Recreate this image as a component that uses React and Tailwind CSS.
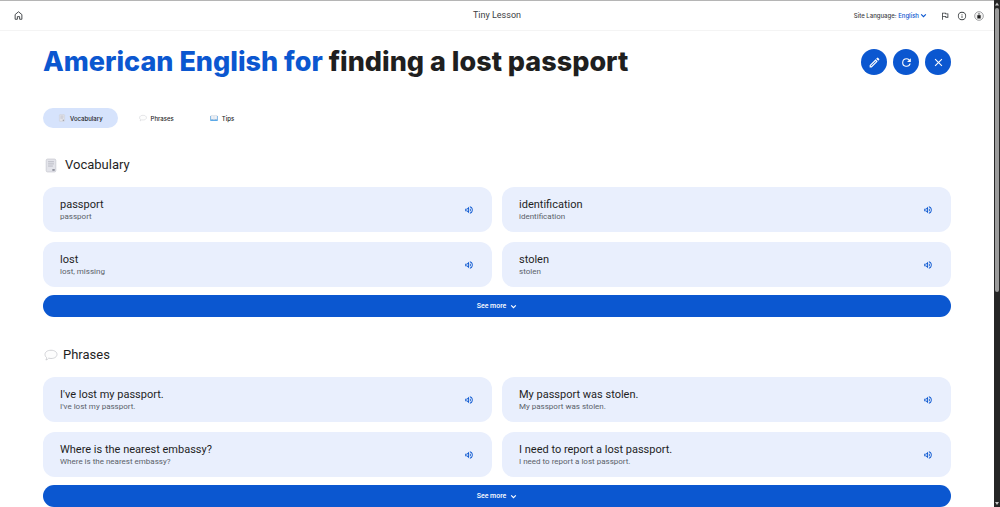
import React, { useState } from 'react';

const VOCABULARY = [
    { term: 'passport', meaning: 'passport' },
    { term: 'identification', meaning: 'identification' },
    { term: 'lost', meaning: 'lost, missing' },
    { term: 'stolen', meaning: 'stolen' },
];

const PHRASES = [
    { term: "I've lost my passport.", meaning: "I've lost my passport." },
    { term: 'My passport was stolen.', meaning: 'My passport was stolen.' },
    { term: 'Where is the nearest embassy?', meaning: 'Where is the nearest embassy?' },
    { term: 'I need to report a lost passport.', meaning: 'I need to report a lost passport.' },
];

const TABS = [
    { id: 'vocabulary', label: 'Vocabulary', icon: NoteIcon },
    { id: 'phrases', label: 'Phrases', icon: BubbleIcon },
    { id: 'tips', label: 'Tips', icon: BookIcon },
];

function NoteIcon({ className }) {
    return (
        <svg viewBox="0 0 24 28" className={className} aria-hidden="true">
            <rect x="3" y="2" width="18" height="24" rx="2.5" fill="#e3e4ea" stroke="#c9cbd2" strokeWidth="1.5" />
            <path d="M6.5 7h11M6.5 11h11M6.5 15h9" stroke="#b0b2bc" strokeWidth="1.5" />
            <path d="M14.5 20.5h4.500v3.500h-4.500Z" fill="#8f929d" />
        </svg>
    );
}

function BubbleIcon({ className }) {
    return (
        <svg viewBox="0 0 28 24" className={className} aria-hidden="true">
            <path
                d="M14 2.5c7 0 12 3.4 12 8.3s-5 8.2-12 8.2c-1.7 0-3.3-.2-4.7-.6C8 20.2 6 21.7 3.8 22c1-1.4 1.5-3 1.3-4.9C3.2 15.5 2 13.3 2 10.8c0-4.900 5-8.300 12-8.300Z"
                fill="#fdfdfd"
                stroke="#c4c6cb"
                strokeWidth="1.5"
            />
        </svg>
    );
}

function BookIcon({ className }) {
    return (
        <svg viewBox="0 0 28 24" className={className} aria-hidden="true">
            <path d="M1 5h26v17H1Z" fill="#3d9be6" />
            <path d="M3 4c4-1.5 8-1.5 11 .5C17 2.5 21 2.5 25 4v14c-4-1-8-1-11 1-3-2-7-2-11-1Z" fill="#eef1f6" stroke="#9fb2c8" />
            <path d="M14 4.5V18" stroke="#b8c4d4" />
        </svg>
    );
}

// Material style glyphs on a 24px grid
function Glyph({ d, className }) {
    return (
        <svg viewBox="0 0 24 24" fill="currentColor" className={className} aria-hidden="true">
            <path d={d} />
        </svg>
    );
}

const GLYPHS = {
    flag: 'M12.36 6l.4 2H18v6h-3.36l-.4-2H7V6h5.36M14 4H5v17h2v-7h5.6l.4 2h7V6h-5.6L14 4Z',
    info: 'M11 7h2v2h-2V7Zm0 4h2v6h-2v-6Zm1-9a10 10 0 1 0 0 20 10 10 0 0 0 0-20Zm0 18a8 8 0 1 1 0-16 8 8 0 0 1 0 16Z',
    edit: 'M14.06 9.02l.92.92L5.92 19H5v-.92l9.06-9.06M17.66 3c-.25 0-.51.1-.7.29l-1.83 1.83 3.75 3.75 1.83-1.83a1 1 0 0 0 0-1.41l-2.34-2.34a.98.98 0 0 0-.71-.29Zm-3.6 3.19L3 17.25V21h3.75L17.81 9.94l-3.75-3.75Z',
    refresh: 'M17.65 6.35A7.96 7.96 0 0 0 12 4a8 8 0 1 0 7.73 10h-2.08A6 6 0 1 1 12 6c1.66 0 3.14.69 4.22 1.78L13 11h7V4l-2.35 2.35Z',
    close: 'M19 6.41 17.59 5 12 10.59 6.41 5 5 6.41 10.59 12 5 17.59 6.41 19 12 13.41 17.59 19 19 17.59 13.41 12 19 6.41Z',
    volume: 'M3 9v6h4l5 5V4L7 9H3Zm7-.17v6.34L7.83 13H5v-2h2.83L10 8.83ZM16.5 12A4.5 4.5 0 0 0 14 7.97v8.05A4.48 4.48 0 0 0 16.5 12ZM14 3.23v2.06a7 7 0 0 1 0 13.42v2.06a9 9 0 0 0 0-17.54Z',
};

function Chevron({ className }) {
    return (
        <svg viewBox="0 0 12 12" fill="none" stroke="currentColor" strokeWidth="2" className={className} aria-hidden="true">
            <path d="m2 4 4 4 4-4" />
        </svg>
    );
}

function Header() {
    return (
        <header className="grid h-[31px] grid-cols-3 items-center border-t border-b border-t-[#b5b5b5] border-b-[#f4f4f4] px-2.5 text-[#3c4043]">
            <a href="#home" aria-label="Home" className="ml-1 justify-self-start">
                <svg viewBox="0 0 24 24" fill="none" stroke="#3c4043" strokeWidth="2.5" className="size-[9px]" aria-hidden="true">
                    <path d="M3 22V9.5L12 2l9 7.5V22h-6v-7H9v7H3Z" />
                </svg>
            </a>
            <span className="justify-self-center text-[9px] whitespace-nowrap">Tiny Lesson</span>
            <div className="flex items-center justify-self-end">
                <button
                    type="button"
                    className="mr-[13px] flex items-center font-[Inter,sans-serif] text-[6px] font-medium whitespace-nowrap"
                >
                    Site Language:&nbsp;<span className="text-[#0b57d0]">English</span>
                    <Chevron className="ml-px size-[7px] text-[#0b57d0]" />
                </button>
                <div className="flex items-center gap-[7px]">
                    <button type="button" aria-label="Send feedback">
                        <Glyph d={GLYPHS.flag} className="size-[10px]" />
                    </button>
                    <button type="button" aria-label="About">
                        <Glyph d={GLYPHS.info} className="size-[10px]" />
                    </button>
                    <button type="button" aria-label="Account">
                        <svg viewBox="0 0 24 24" className="size-[10px]" aria-hidden="true">
                            <circle cx="12" cy="12" r="10.5" fill="#f1f1f1" stroke="#77797c" strokeWidth="1.5" />
                            <circle cx="12" cy="7" r="2" fill="#77797c" />
                            <path d="M8 10h8v8H8Z" fill="#1f1f1f" />
                        </svg>
                    </button>
                </div>
            </div>
        </header>
    );
}

function RoundButton({ label, glyph }) {
    return (
        <button
            type="button"
            aria-label={label}
            className="flex size-[26px] items-center justify-center rounded-full bg-[#0b57d0] text-white"
        >
            <Glyph d={glyph} className="size-[13px]" />
        </button>
    );
}

function WordCard({ term, meaning }) {
    return (
        <li className="flex h-[45px] items-center justify-between rounded-xl bg-[#e9effd] pr-[18px] pl-[17px]">
            <div>
                <p className="text-[11px] leading-[14px] text-[#1f1f1f]">{term}</p>
                <p className="text-[8px] leading-[10px] text-[#5a5f69]">{meaning}</p>
            </div>
            <button type="button" aria-label={`Listen to ${term}`} className="text-[#0b57d0]">
                <Glyph d={GLYPHS.volume} className="size-[10px]" />
            </button>
        </li>
    );
}

function Section({ id, title, icon, items }) {
    return (
        <section id={id}>
            <h2 className="flex h-6 items-center text-[13px] text-[#1f1f1f]">
                {icon}
                {title}
            </h2>
            <ul className="mt-[10px] grid grid-cols-2 gap-[10px]">
                {items.map((item) => (
                    <WordCard key={item.term} term={item.term} meaning={item.meaning} />
                ))}
            </ul>
            <button
                type="button"
                className="mt-2 flex h-[22px] w-full items-center justify-center gap-1 rounded-full bg-[#0b57d0] text-[7px] font-medium text-white"
            >
                See more
                <Chevron className="size-[7px]" />
            </button>
        </section>
    );
}

function ScrollTrack() {
    return (
        <div className="flex w-[6px] shrink-0 flex-col items-center bg-[#262626]" aria-hidden="true">
            <svg viewBox="0 0 6 8" className="h-2 w-full">
                <path d="M1 5.5 3 2.5l2 3Z" fill="#c8c8c8" />
            </svg>
            <div className="h-[56%] w-1 rounded-sm bg-[#9b9b9b]" />
            <svg viewBox="0 0 6 8" className="mt-auto h-2 w-full">
                <path d="M1 3h4L3 6Z" fill="#c8c8c8" />
            </svg>
        </div>
    );
}

export default function App() {
    const [activeTab, setActiveTab] = useState('vocabulary');

    return (
        <div className="flex h-screen overflow-hidden bg-white font-[Roboto,'Liberation_Sans',sans-serif]">
            <div className="min-w-0 flex-1 overflow-hidden">
                <Header />
                <main className="px-[43px] pt-[13px]">
                    <div className="flex items-center justify-between">
                        <h1 className="font-[Inter,sans-serif] text-[27px] leading-9 font-extrabold text-[#1f1f1f]">
                            <span className="text-[#0b57d0]">American English for</span> finding a lost passport
                        </h1>
                        <div className="flex gap-[6px]">
                            <RoundButton label="Edit" glyph={GLYPHS.edit} />
                            <RoundButton label="Regenerate" glyph={GLYPHS.refresh} />
                            <RoundButton label="Close" glyph={GLYPHS.close} />
                        </div>
                    </div>

                    <nav className="mt-7 flex gap-[6px]">
                        {TABS.map((tab) => (
                            <button
                                key={tab.id}
                                type="button"
                                onClick={() => setActiveTab(tab.id)}
                                className={`flex h-5 items-center gap-1 rounded-full px-[15px] font-[Inter,sans-serif] text-[6px] font-medium text-[#1f1f1f] ${
                                    activeTab === tab.id ? 'bg-[#d6e3fc]' : ''
                                }`}
                            >
                                <tab.icon className="size-2" />
                                {tab.label}
                            </button>
                        ))}
                    </nav>

                    <div className="mt-[25px] space-y-[26px]">
                        <Section
                            id="vocabulary"
                            title="Vocabulary"
                            icon={<NoteIcon className="mr-[6px] h-[15px] w-4" />}
                            items={VOCABULARY}
                        />
                        <Section
                            id="phrases"
                            title="Phrases"
                            icon={<BubbleIcon className="mr-1 h-3 w-4" />}
                            items={PHRASES}
                        />
                    </div>
                </main>
            </div>
            <ScrollTrack />
        </div>
    );
}
